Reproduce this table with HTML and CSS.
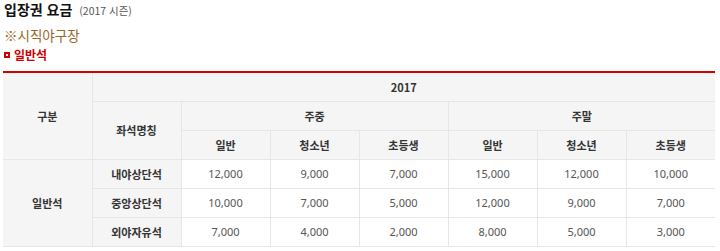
FILE: index.html
```html
<!DOCTYPE html>
<html lang="ko">
<head>
<meta charset="utf-8">
<link rel="stylesheet" href="styles.css">
</head>
<body>
<div class="page">
  <h1 class="title">입장권 요금 <span class="season">(2017 시즌)</span></h1>
  <h2 class="stadium">※시직야구장</h2>
  <h3 class="section"><span class="bullet"></span>일반석</h3>
  <table class="price">
    <thead>
      <tr>
        <th rowspan="3">구분</th>
        <th colspan="7" class="year">2017</th>
      </tr>
      <tr>
        <th rowspan="2">좌석명칭</th>
        <th colspan="3">주중</th>
        <th colspan="3">주말</th>
      </tr>
      <tr>
        <th>일반</th><th>청소년</th><th>초등생</th>
        <th>일반</th><th>청소년</th><th>초등생</th>
      </tr>
    </thead>
    <tbody>
      <tr>
        <th rowspan="3">일반석</th>
        <th>내야상단석</th>
        <td>12,000</td><td>9,000</td><td>7,000</td><td>15,000</td><td>12,000</td><td>10,000</td>
      </tr>
      <tr>
        <th>중앙상단석</th>
        <td>10,000</td><td>7,000</td><td>5,000</td><td>12,000</td><td>9,000</td><td>7,000</td>
      </tr>
      <tr>
        <th>외야자유석</th>
        <td>7,000</td><td>4,000</td><td>2,000</td><td>8,000</td><td>5,000</td><td>3,000</td>
      </tr>
    </tbody>
  </table>
</div>
</body>
</html>
```
FILE: styles.css
```css
* { box-sizing: border-box; }
html, body { margin: 0; padding: 0; background: #fff; }
body {
  font-family: "Noto Sans CJK KR", "Noto Sans", sans-serif;
  color: #333;
}
.page { padding: 0 0 0 4px; }
.title {
  margin: 0;
  font-size: 14px;
  font-weight: bold;
  color: #111;
  line-height: 18px;
  height: 25px;
  padding-top: 0;
  white-space: nowrap;
}
.season {
  font-size: 10.5px;
  font-weight: normal;
  color: #555;
  margin-left: 3px;
}
.stadium {
  margin: 0;
  font-size: 13.5px;
  font-weight: normal;
  color: #9a6424;
  line-height: 20px;
  height: 22px;
}
.section {
  margin: 0;
  font-size: 12px;
  font-weight: bold;
  color: #cc0000;
  line-height: 16px;
  height: 16px;
  display: flex;
  align-items: center;
  gap: 4px;
}
.bullet {
  width: 6px;
  height: 6px;
  border: 2px solid #cc0000;
  background: #fff;
  display: inline-block;
}
.price {
  margin-top: 8px;
  margin-left: -1px;
  width: 712px;
  border-collapse: collapse;
  table-layout: fixed;
  border-top: 2px solid #d60000;
  border-bottom: 1px solid #e2e2e2;
  font-size: 11px;
}
.price th, .price td {
  border: 1px solid #e6e6e6;
  height: 29px;
  padding: 0;
  text-align: center;
  vertical-align: middle;
  line-height: 14px;
}
.price tr > :first-child { border-left: none; }
.price tr > :last-child { border-right: none; }
.price th {
  background: #f5f5f5;
  font-weight: bold;
  color: #333;
}
.price td {
  background: #fff;
  color: #555;
  font-family: "Noto Sans", "Noto Sans CJK KR", sans-serif;
}
```
